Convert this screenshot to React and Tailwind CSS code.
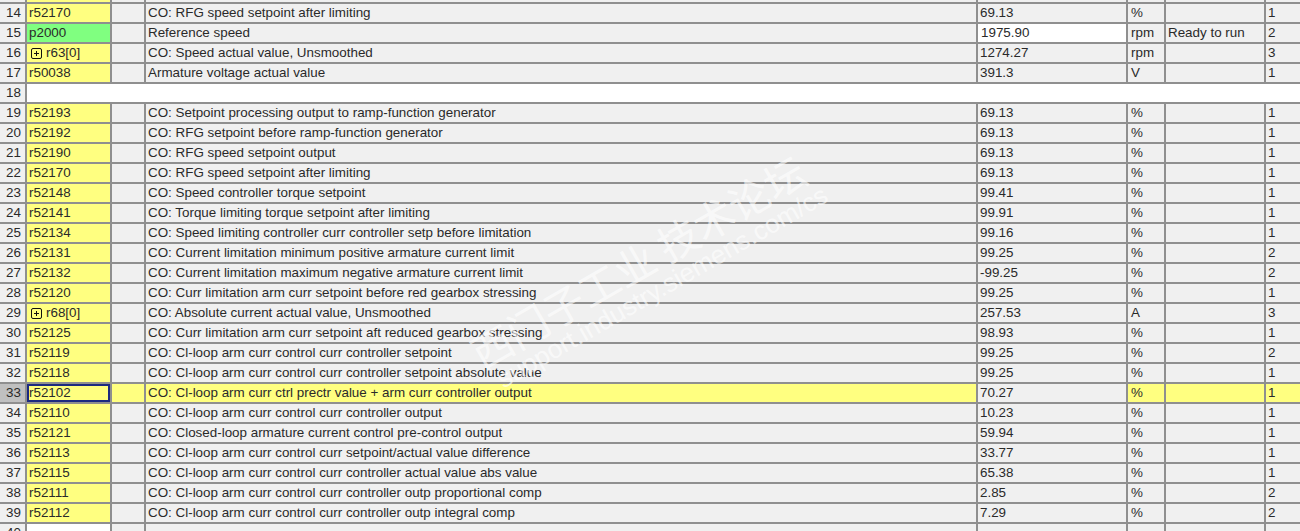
const rows = [
  [14,"r52170","CO: RFG speed setpoint after limiting","69.13","%","","1"],
  [15,"p2000","Reference speed","1975.90","rpm","Ready to run","2"],
  [16,"r63[0]","CO: Speed actual value, Unsmoothed","1274.27","rpm","","3"],
  [17,"r50038","Armature voltage actual value","391.3","V","","1"],
  [18],
  [19,"r52193","CO: Setpoint processing output to ramp-function generator","69.13","%","","1"],
  [20,"r52192","CO: RFG setpoint before ramp-function generator","69.13","%","","1"],
  [21,"r52190","CO: RFG speed setpoint output","69.13","%","","1"],
  [22,"r52170","CO: RFG speed setpoint after limiting","69.13","%","","1"],
  [23,"r52148","CO: Speed controller torque setpoint","99.41","%","","1"],
  [24,"r52141","CO: Torque limiting torque setpoint after limiting","99.91","%","","1"],
  [25,"r52134","CO: Speed limiting controller curr controller setp before limitation","99.16","%","","1"],
  [26,"r52131","CO: Current limitation minimum positive armature current limit","99.25","%","","2"],
  [27,"r52132","CO: Current limitation maximum negative armature current limit","-99.25","%","","2"],
  [28,"r52120","CO: Curr limitation arm curr setpoint before red gearbox stressing","99.25","%","","1"],
  [29,"r68[0]","CO: Absolute current actual value, Unsmoothed","257.53","A","","3"],
  [30,"r52125","CO: Curr limitation arm curr setpoint aft reduced gearbox stressing","98.93","%","","1"],
  [31,"r52119","CO: Cl-loop arm curr control curr controller setpoint","99.25","%","","2"],
  [32,"r52118","CO: Cl-loop arm curr control curr controller setpoint absolute value","99.25","%","","1"],
  [33,"r52102","CO: Cl-loop arm curr ctrl prectr value + arm curr controller output","70.27","%","","1"],
  [34,"r52110","CO: Cl-loop arm curr control curr controller output","10.23","%","","1"],
  [35,"r52121","CO: Closed-loop armature current control pre-control output","59.94","%","","1"],
  [36,"r52113","CO: Cl-loop arm curr control curr setpoint/actual value difference","33.77","%","","1"],
  [37,"r52115","CO: Cl-loop arm curr control curr controller actual value abs value","65.38","%","","1"],
  [38,"r52111","CO: Cl-loop arm curr control curr controller outp proportional comp","2.85","%","","2"],
  [39,"r52112","CO: Cl-loop arm curr control curr controller outp integral comp","7.29","%","","2"],
];

const line = "border-r-2 border-[#8f8f8f]";

function Expand() {
  return (
    <svg width="11" height="11" viewBox="0 0 11 11" className="mr-[4px] ml-[2px] shrink-0">
      <rect x="0.5" y="0.5" width="10" height="10" rx="1.5" fill="none" stroke="#111" />
      <path d="M3 5.5h5M5.5 3v5" stroke="#111" />
    </svg>
  );
}

function Row({ r }) {
  const [n, name, desc, val, unit, status, lvl] = r;
  const sel = n === 33;
  const cell = sel ? "bg-[#ffff80]" : "bg-[#f0f0f0]";
  return (
    <div className="flex h-5 border-b-2 border-[#8f8f8f] text-[13.4px] leading-[18px] text-[#2a2a2a]">
      <div className={`w-[27px] pr-[4px] text-right ${line} ${sel ? "bg-[#c0c0c0]" : "bg-[#f0f0f0]"}`}>{n}</div>
      {name ? (
        <>
          <div className={`w-[85px] ${line} ${n === 15 ? "bg-[#80ff80]" : "bg-[#ffff80]"}`}>
            <div className={`flex items-center h-full pl-[2px] ${sel ? "border-2 border-[#1c2a80]" : ""}`}>
              {name.includes("[") && <Expand />}
              <span className={sel ? "-ml-[2px]" : ""}>{name}</span>
            </div>
          </div>
          <div className={`w-[34px] ${line} ${cell}`} />
          <div className={`w-[832px] pl-[2px] ${line} ${cell}`}>{desc}</div>
          <div className={`w-[150px] ${line} ${n === 15 ? "bg-white pl-[3px]" : "bg-[#f0f0f0] pl-[2px]"}`}>{val}</div>
          <div className={`w-[38px] pl-[3px] ${line} ${cell}`}>{unit}</div>
          <div className={`w-[100px] pl-[2px] ${line} ${cell}`}>{status}</div>
          <div className={`flex-1 pl-[2px] ${cell}`}>{lvl}</div>
        </>
      ) : (
        <div className="flex-1 bg-white" />
      )}
    </div>
  );
}

export default function App() {
  return (
    <div className="relative w-[1300px] h-[531px] overflow-hidden bg-white font-['Liberation_Sans',Arial,sans-serif]">
      <div className="flex h-[4px] border-b-2 border-[#8f8f8f]">
        <div className={`w-[27px] bg-[#f0f0f0] ${line}`} />
        <div className={`w-[85px] bg-[#ffff80] ${line}`} />
        <div className={`w-[34px] bg-[#f0f0f0] ${line}`} />
        <div className={`w-[832px] bg-[#f0f0f0] ${line}`} />
        <div className={`w-[150px] bg-[#f0f0f0] ${line}`} />
        <div className={`w-[38px] bg-[#f0f0f0] ${line}`} />
        <div className={`w-[100px] bg-[#f0f0f0] ${line}`} />
        <div className="flex-1 bg-[#f0f0f0]" />
      </div>
      {rows.map((r) => <Row key={r[0]} r={r} />)}
      <div className="flex h-5 text-[13.4px] leading-[18px] text-[#2a2a2a]">
        <div className={`w-[27px] pr-[4px] text-right bg-[#f0f0f0] ${line}`}>40</div>
        <div className={`w-[85px] bg-white ${line}`} />
        <div className={`w-[34px] bg-[#f0f0f0] ${line}`} />
        <div className={`w-[832px] bg-[#f0f0f0] ${line}`} />
        <div className={`w-[150px] bg-[#f0f0f0] ${line}`} />
        <div className={`w-[38px] bg-[#f0f0f0] ${line}`} />
        <div className={`w-[100px] bg-[#f0f0f0] ${line}`} />
        <div className="flex-1 bg-[#f0f0f0]" />
      </div>
      <div className="absolute left-[474px] top-[335px] origin-left -rotate-[30deg] whitespace-nowrap text-white/60 text-[41px] leading-none font-['Noto_Sans_CJK_SC',sans-serif] pointer-events-none">
        西门子工业&nbsp;技术论坛
      </div>
      <div className="absolute left-[499px] top-[368px] origin-left -rotate-[30deg] whitespace-nowrap text-white/60 text-[26px] leading-none pointer-events-none">
        support.industry.siemens.com/cs
      </div>
    </div>
  );
}
